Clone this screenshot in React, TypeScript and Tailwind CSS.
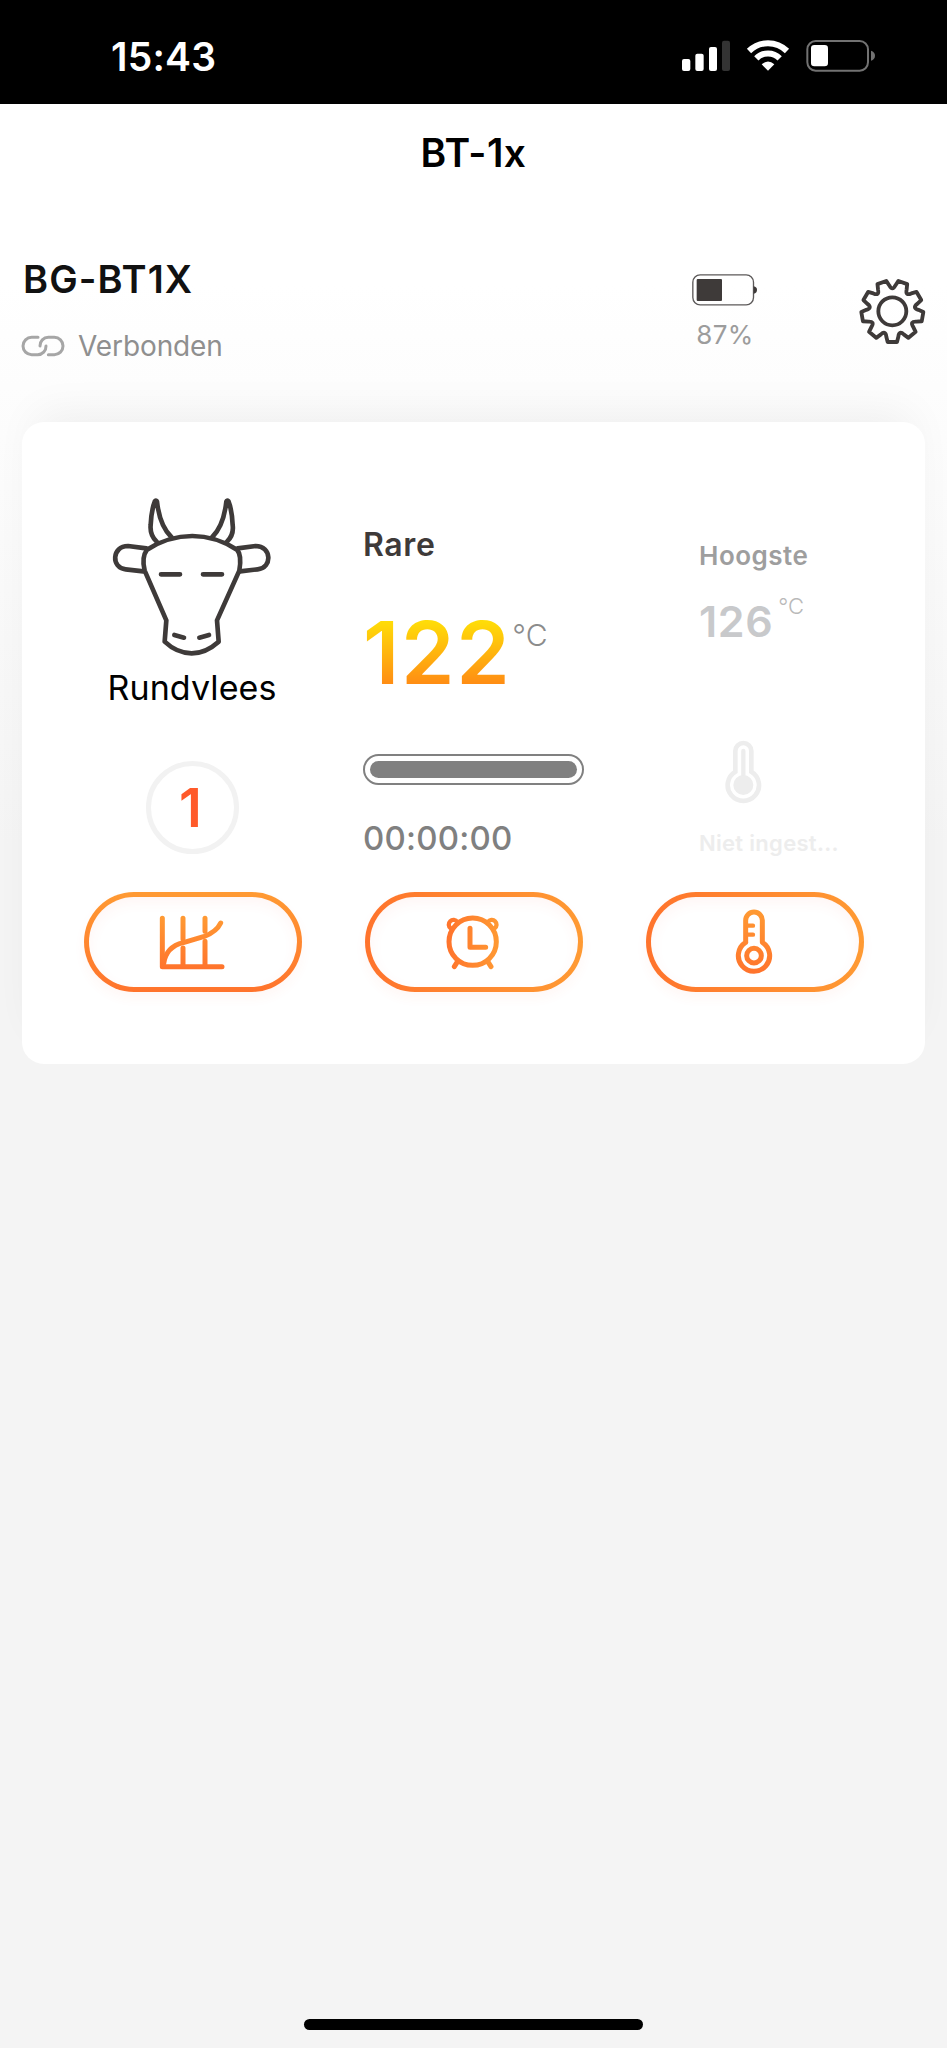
import type { ReactNode } from "react";

const DARK = "#3e3a39";

// Nine-toothed cog around the origin
function cogPath() {
  const at = (deg: number, r: number, side: number) => {
    const a = (deg * Math.PI) / 180;
    const x = Math.cos(a) * r - Math.sin(a) * side;
    const y = Math.sin(a) * r + Math.cos(a) * side;
    return `${x.toFixed(1)} ${y.toFixed(1)}`;
  };
  let d = "";
  for (let i = 0; i < 9; i++) {
    const deg = 90 + i * 40;
    d += `${i ? "L" : "M"}${at(deg, 92, -14)} L${at(deg, 92, 14)} L${at(deg, 76, 18)} `;
    d += `Q${at(deg + 20, 60, 0)} ${at(deg + 40, 76, -18)} `;
  }
  return d + "Z";
}

function StatusIcons() {
  return (
    <svg width="196" height="34" viewBox="63 57 588 102" fill="none">
      <g fill="#fff">
        <rect x="66" y="117" width="25" height="36" rx="6" />
        <rect x="106" y="101" width="25" height="52" rx="6" />
        <rect x="147" y="81" width="24" height="72" rx="6" />
        <rect x="186" y="62" width="24" height="91" rx="6" fill="#333" />
        <path d="M324 152 L305 133 Q324 116 343 133 Z" />
        <rect x="453" y="75" width="51" height="64" rx="10" />
      </g>
      <path d="M267 93 A81 81 0 0 1 381 93 M289 115 A49 49 0 0 1 359 115" stroke="#fff" strokeWidth="18" />
      <rect x="442" y="63" width="182" height="89" rx="25" stroke="#727272" strokeWidth="6" />
      <path d="M633 92 Q645 96 645 107 Q645 118 633 122 Z" fill="#727272" />
    </svg>
  );
}

function LinkIcon() {
  return (
    <svg width="44" height="22" viewBox="63 279 132 66" fill="none" stroke="#a6a6a6" strokeWidth="9" strokeLinecap="round">
      <path d="M114 286 H95 A26 26 0 0 0 95 338 H113 A25 25 0 0 0 138 312" />
      <path d="M120 312 A25 25 0 0 1 145 286 H163 A26 26 0 0 1 163 338 H145" />
    </svg>
  );
}

function DeviceBattery() {
  return (
    <svg width="66" height="32" viewBox="96 71 198 96" fill="none">
      <rect x="98.5" y="73.5" width="182" height="90" rx="22" stroke="#5c5959" strokeWidth="4" />
      <rect x="110" y="86" width="76" height="66" rx="3" fill={DARK} />
      <path d="M281 108 Q291 110 291 119 Q291 128 281 130 Z" fill={DARK} />
    </svg>
  );
}

function CowIcon() {
  return (
    <svg width="160" height="160" viewBox="69 48 480 480" fill="none" stroke={DARK} strokeWidth="14" strokeLinecap="round" strokeLinejoin="round">
      <path d="M174 209 Q238 168 310 168 Q380 168 444 209 Q459 226 451 272 L384 421 L389 485 Q350 520 308 520 Q264 520 227 485 L232 421 L167 272 Q157 232 174 209 Z" />
      <path d="M203 185 Q182 165 185 135 Q187 90 198 63 Q202 60 204 65 Q212 137 247 171" />
      <path d="M414 185 Q435 165 431 135 Q429 90 418 63 Q414 60 412 65 Q404 137 370 171" />
      <path d="M172 205 L117 198 C68 198 66 264 110 268 L163 274" />
      <path d="M446 205 L500 198 C548 198 551 264 506 268 L453 274" />
      <path d="M216 283 H273 M342 283 H399 M256 465 L285 473 M331 473 L360 465" />
    </svg>
  );
}

function ProbeIcon() {
  return (
    <svg width="37" height="64" viewBox="287 30 111 192" fill="none" stroke="#ededed" strokeLinecap="round">
      <path d="M318 125 V63 A24 24 0 0 1 366 63 V125 A47 47 0 1 1 318 125 Z" strokeWidth="14" />
      <path d="M342 63 V150" strokeWidth="13" />
      <circle cx="342" cy="165" r="30" fill="#ededed" stroke="none" />
    </svg>
  );
}

function ChartIcon() {
  return (
    <svg className="-ml-[3px]" width="66" height="55" viewBox="297 523 198 165" fill="none" stroke="url(#chartStroke)" strokeWidth="15" strokeLinecap="round" strokeLinejoin="round">
      <defs>
        <linearGradient id="chartStroke" gradientUnits="userSpaceOnUse" x1="0" y1="526" x2="0" y2="686">
          <stop offset="0" stopColor="#ff9a33" />
          <stop offset="1" stopColor="#ff732c" />
        </linearGradient>
      </defs>
      <path d="M307 533 V678 H486 M369 533 V596 M369 622 V678 M435 533 V572 M435 602 V678" />
      <path d="M311 669 C316 632 340 613 370 606 L433 587 Q470 573 482 547" />
    </svg>
  );
}

function ClockIcon() {
  return (
    <svg className="-ml-[3px]" width="56" height="56" viewBox="315 521 168 168" fill="none" stroke="url(#clockStroke)" strokeWidth="15" strokeLinecap="round" strokeLinejoin="round">
      <defs>
        <linearGradient id="clockStroke" gradientUnits="userSpaceOnUse" x1="318" y1="0" x2="480" y2="0">
          <stop offset="0" stopColor="#ff732c" />
          <stop offset="1" stopColor="#ff9a33" />
        </linearGradient>
      </defs>
      <circle cx="398" cy="604" r="71" />
      <path d="M390 564 V621 H437 M353 663 L343 679 M443 663 L453 679" />
      <path d="M332 564 A14 14 0 1 1 352 545 M464 564 A14 14 0 1 0 444 545" strokeWidth="13" />
    </svg>
  );
}

function ThermometerIcon() {
  return (
    <svg className="-ml-[3px]" width="40" height="68" viewBox="312 535 120 204" fill="none" stroke="url(#thermoStroke)" strokeWidth="15" strokeLinecap="round" strokeLinejoin="round">
      <defs>
        <linearGradient id="thermoStroke" gradientUnits="userSpaceOnUse" x1="0" y1="540" x2="0" y2="732">
          <stop offset="0" stopColor="#ff9a33" />
          <stop offset="1" stopColor="#ff732c" />
        </linearGradient>
      </defs>
      <path d="M347 638 V572 A25 25 0 0 1 397 572 V638 A47 47 0 1 1 347 638" />
      <path d="M352 588 H369 M352 615 H369" strokeWidth="13" />
      <circle cx="372" cy="678" r="22" />
    </svg>
  );
}

function PillButton({ label, vertical, children }: { label: string; vertical?: boolean; children: ReactNode }) {
  const ring = vertical ? "bg-linear-to-b from-[#ff9a33] to-[#ff732c]" : "bg-linear-to-r from-[#ff732c] to-[#ff9a33]";
  return (
    <button aria-label={label} className={`h-[100px] rounded-full p-[5px] shadow-[0_6px_12px_rgba(255,90,60,0.05)] ${ring}`}>
      <span className="flex h-full w-full items-center justify-center rounded-full bg-white shadow-[inset_0_5px_14px_rgba(255,90,60,0.06)]">
        {children}
      </span>
    </button>
  );
}

export default function App() {
  return (
    <div className="flex h-[2048px] w-[947px] flex-col overflow-hidden bg-[#f4f4f4] font-['Inter',sans-serif]">
      {/* Status bar */}
      <div className="flex h-[104px] shrink-0 items-start justify-between bg-black pr-[70px] pl-[111px]">
        <span className="mt-[37px] text-[39px] leading-none font-semibold tracking-[0.2px] text-white">15:43</span>
        <div className="mt-[39px]">
          <StatusIcons />
        </div>
      </div>

      <div className="flex flex-1 flex-col bg-[linear-gradient(to_bottom,#ffffff_180px,#f4f4f4_740px)]">
        <h1 className="mt-[29px] text-center text-[39px] leading-none font-semibold tracking-[0.4px] text-black">BT-1x</h1>

        {/* Device header */}
        <header className="mt-[88px] flex h-[162px] items-start justify-between pr-[21px] pl-[21px]">
          <div>
            <h2 className="pl-[2px] text-[38px] leading-none font-semibold tracking-[1.1px] text-[#111]">BG-BT1X</h2>
            <div className="mt-[33px] flex items-center gap-[13px]">
              <LinkIcon />
              <span className="pt-px text-[28px] leading-none tracking-[-0.1px] text-[#8f8f8f]">Verbonden</span>
            </div>
          </div>
          <div className="flex items-start">
            <div className="mt-[14px] mr-[101px] flex flex-col items-center">
              <DeviceBattery />
              <span className="mt-[16px] text-[26px] leading-none tracking-[0.4px] text-[#9c9c9c]">87%</span>
            </div>
            <svg className="mt-[18px]" width="67" height="67" viewBox="-100 -100 201 201" fill="none" stroke={DARK} strokeWidth="11.5">
              <path d={cogPath()} strokeLinejoin="round" />
              <circle r="42" />
            </svg>
          </div>
        </header>

        {/* Probe card */}
        <section className="mx-[22px] h-[642px] rounded-[22px] bg-white pr-[61px] pl-[62px] shadow-[0_-22px_44px_-14px_rgba(0,0,0,0.06)]">
          <div className="grid h-[470px] grid-cols-[218px_218px_218px] gap-x-[63px]">
            <div className="-ml-[2px] flex flex-col items-center pt-[74px]">
              <CowIcon />
              <span className="mt-[15px] text-[34px] leading-none tracking-[0.1px] text-black">Rundvlees</span>
              <div className="mt-[56px] flex h-[93px] w-[93px] items-center justify-center rounded-full border-[5px] border-[#f2f2f2]">
                <span className="-ml-[3px] text-[54px] leading-none font-semibold text-[#ff5a2a]">1</span>
              </div>
            </div>

            <div className="-ml-[2px] flex w-[221px] flex-col pt-[107px]">
              <span className="text-[32px] leading-none font-semibold tracking-[0.6px] text-[#3e3a39]">Rare</span>
              <div className="mt-[49px] flex h-[86px] items-start">
                <span className="bg-[linear-gradient(to_bottom,#ffdc08_14%,#ff8c14_87%)] bg-clip-text text-[86px] leading-none font-semibold tracking-[1.6px] text-transparent">122</span>
                <span className="mt-[10px] ml-px text-[30px] leading-none font-light text-[#8c8c8c]">°C</span>
              </div>
              <div className="mt-[58px] h-[31px] rounded-full border-2 border-[#808080] p-[5px]">
                <div className="h-full rounded-full bg-[#808080]" />
              </div>
              <span className="mt-[37px] text-[33px] leading-none font-medium tracking-[0.2px] text-[#808080]">00:00:00</span>
            </div>

            <div className="flex flex-col pt-[121px] pl-[53px] whitespace-nowrap">
              <span className="text-[26px] leading-none font-semibold tracking-[0.5px] text-[#9e9e9e]">Hoogste</span>
              <div className="mt-[31px] flex h-[43px] items-start">
                <span className="text-[43px] leading-none font-semibold tracking-[0.6px] text-[#c8c9cb]">126</span>
                <span className="-mt-[5px] ml-[5px] text-[22px] leading-none font-light text-[#b9b9b9]">°C</span>
              </div>
              <div className="mt-[97px] ml-[26px]">
                <ProbeIcon />
              </div>
              <span className="mt-[28px] text-[22px] leading-none font-semibold tracking-[0.3px] text-[#ededed]">Niet ingest...</span>
            </div>
          </div>

          <div className="grid grid-cols-[218px_218px_218px] gap-x-[63px]">
            <PillButton label="Grafiek" vertical>
              <ChartIcon />
            </PillButton>
            <PillButton label="Timer">
              <ClockIcon />
            </PillButton>
            <PillButton label="Temperatuur">
              <ThermometerIcon />
            </PillButton>
          </div>
        </section>

        <div className="mx-auto mt-auto mb-[18px] h-[11px] w-[339px] rounded-full bg-black" />
      </div>
    </div>
  );
}
